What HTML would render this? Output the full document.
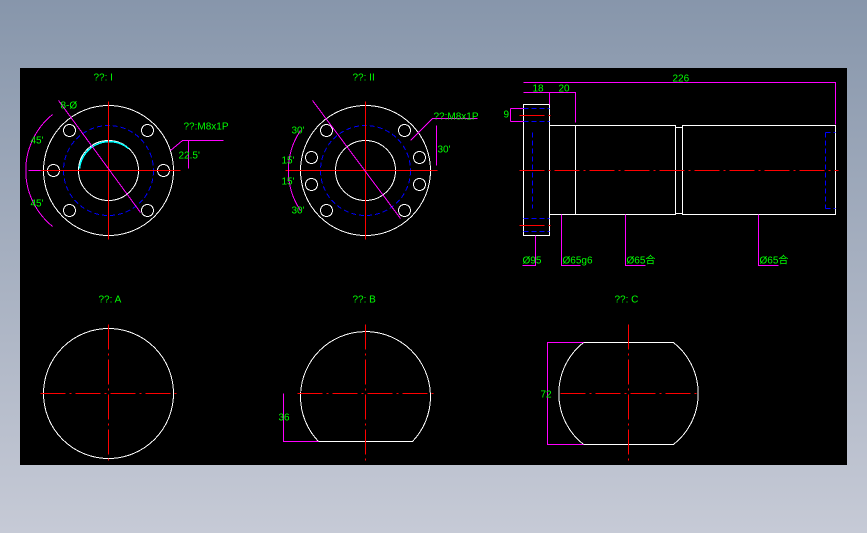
<!DOCTYPE html>
<html><head><meta charset="utf-8"><style>
html,body{margin:0;padding:0}
body{width:867px;height:533px;background:linear-gradient(#8796ab,#c6cad6);position:relative;overflow:hidden}
svg{position:absolute;left:0;top:0}
text{font-family:"Liberation Sans",sans-serif;fill:#00ff00;font-size:10px}
</style></head><body>
<svg width="867" height="533" viewBox="0 0 867 533">
<rect x="20" y="68" width="827" height="397" fill="#000"/>
<g fill="none" stroke-width="1" transform="translate(0.5,0.5)" shape-rendering="crispEdges">
<!-- view I -->
<circle cx="108" cy="170" r="65" stroke="#fff"/>
<circle cx="108" cy="170" r="45" stroke="#00f" stroke-dasharray="5,3"/>
<circle cx="108" cy="170" r="30" stroke="#fff"/>
<path d="M79 168 A30 30 0 0 1 128 148" stroke="#0ff" stroke-width="1.5"/>
<g stroke="#fff"><circle cx="69" cy="130" r="6"/><circle cx="147" cy="130" r="6"/><circle cx="53" cy="170" r="6"/><circle cx="163" cy="170" r="6"/><circle cx="69" cy="210" r="6"/><circle cx="147" cy="210" r="6"/></g>
<g stroke="#f00"><path d="M108 101V239M28 170H180"/></g>
<g stroke="#f0f"><path d="M58 100L140 212M52 114A72 72 0 0 0 52 226M28 170H40M170 150L182 140H223M188 140L188 168"/></g>
<text x="93" y="80">??: I</text><text x="183" y="129">??:M8x1P</text><text x="30" y="143">45'</text><text x="30" y="206">45'</text><text x="178" y="158" font-size="9">22.5'</text><text x="60" y="108" font-size="8">8-Ø</text>
<!-- view II -->
<circle cx="365" cy="170" r="65" stroke="#fff"/>
<circle cx="365" cy="170" r="45" stroke="#00f" stroke-dasharray="5,3"/>
<circle cx="365" cy="170" r="30" stroke="#fff"/>
<g stroke="#fff"><circle cx="326" cy="130" r="6"/><circle cx="404" cy="130" r="6"/><circle cx="311" cy="157" r="6"/><circle cx="419" cy="157" r="6"/><circle cx="311" cy="184" r="6"/><circle cx="419" cy="184" r="6"/><circle cx="326" cy="210" r="6"/><circle cx="404" cy="210" r="6"/></g>
<g stroke="#f00"><path d="M365 101V239M285 170H437"/></g>
<g stroke="#f0f"><path d="M312 100L400 218M300 130A72 72 0 0 0 300 210M410 140L432 118H477M436 125L436 165"/></g>
<text x="352" y="80">??: II</text><text x="433" y="119">??:M8x1P</text><text x="291" y="133">30'</text><text x="281" y="163">15'</text><text x="281" y="184">15'</text><text x="291" y="213">30'</text><text x="437" y="152">30'</text>
<!-- side view -->
<g stroke="#fff"><path d="M523 104V235H549V104ZM549 125H675V214H549ZM682 125H835V214H682ZM675 127H682V213H675ZM575 125V214"/></g>
<g stroke="#00f" stroke-dasharray="5,3"><path d="M523 108H549M523 121H549M523 218H549M523 231H549M532 132V208M825 132V208M825 132H835M825 208H835"/></g>
<g stroke="#f00" stroke-dasharray="25,4,2,4"><path d="M519 170H838M519 115H552M519 225H552"/></g>
<g stroke="#f0f"><path d="M523 82H835V124M523 92H575V122M549 92V104M510 108H523M510 121H523M510 108V121M535 235V265H522M561 214V265H580M625 214V265H645M758 214V265H778"/></g>
<text x="672" y="81" font-size="8">226</text><text x="532" y="91" font-size="8">18</text><text x="558" y="91" font-size="8">20</text><text x="503" y="117" font-size="8">9</text>
<text x="522" y="263" font-size="7">Ø95</text><text x="562" y="263" font-size="7">Ø65g6</text><text x="626" y="263" font-size="7">Ø65合</text><text x="759" y="263" font-size="7">Ø65合</text>
<!-- bottom -->
<circle cx="108" cy="393" r="65" stroke="#fff"/>
<path d="M108 324V462M40 393H177" stroke="#f00" stroke-dasharray="25,4,2,4"/>
<text x="98" y="302">??: A</text>
<path d="M318 441A65 65 0 1 1 412 441Z" stroke="#fff"/>
<path d="M365 324V462M297 393H437" stroke="#f00" stroke-dasharray="25,4,2,4"/>
<path d="M283 393V441H318" stroke="#f0f"/><text x="352" y="302">??: B</text><text x="278" y="420" font-size="8">36</text>
<path d="M583 342H673A65 65 0 0 1 673 444H583A65 65 0 0 1 583 342Z" stroke="#fff"/>
<path d="M628 324V462M560 393H697" stroke="#f00" stroke-dasharray="25,4,2,4"/>
<path d="M583 342H547V444H583" stroke="#f0f"/><text x="614" y="302">??: C</text><text x="540" y="397" font-size="8">72</text>
</g>
</svg>
</body></html>
